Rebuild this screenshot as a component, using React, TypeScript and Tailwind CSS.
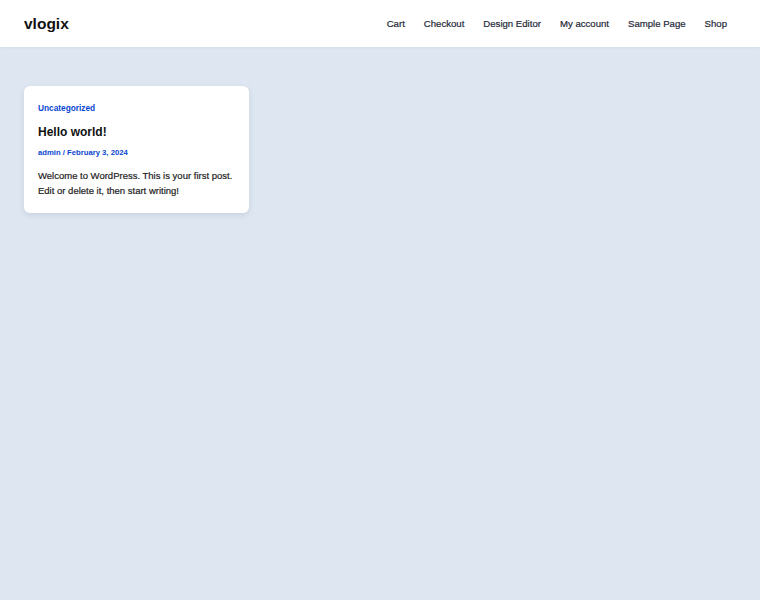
import React from 'react';

const navItems = ['Cart', 'Checkout', 'Design Editor', 'My account', 'Sample Page', 'Shop'];

export default function App() {
  return (
    <main className="min-h-screen bg-[#dee7f1] font-['Liberation_Sans',Arial,sans-serif]">
      {/* Header */}
      <header className="h-[47px] bg-white flex items-center justify-between pl-6 pr-[33px] shadow-[0_1px_2px_rgba(0,0,0,0.04)]">
        <a href="#" className="text-[15.5px] font-bold text-[#111] leading-none">vlogix</a>
        <nav className="flex items-center gap-[19px] pt-[2px]">
          {navItems.map((item) => (
            <a key={item} href="#" className="text-[9.6px] text-[#1f2937] [-webkit-text-stroke:0.2px_#1f2937]">
              {item}
            </a>
          ))}
        </nav>
      </header>

      {/* Posts */}
      <section className="px-6 pt-[39px]">
        <article className="w-[225px] bg-white rounded-md px-[14px] pt-[16px] pb-[15px] shadow-[0_2px_6px_rgba(40,60,90,0.12)]">
          <a href="#" className="block text-[8.3px] font-bold text-[#0a47d1] leading-[12px]">Uncategorized</a>
          <h2 className="mt-[10px] text-[12px] font-bold text-[#111] leading-[16px]">Hello world!</h2>
          <p className="mt-[7px] text-[7.7px] font-bold text-[#0a47d1] leading-[12px]">admin / February 3, 2024</p>
          <p className="mt-[9px] text-[9.5px] text-[#222] leading-[15px] [-webkit-text-stroke:0.2px_#222]">
            Welcome to WordPress. This is your first post. Edit or delete it, then start writing!
          </p>
        </article>
      </section>
    </main>
  );
}
